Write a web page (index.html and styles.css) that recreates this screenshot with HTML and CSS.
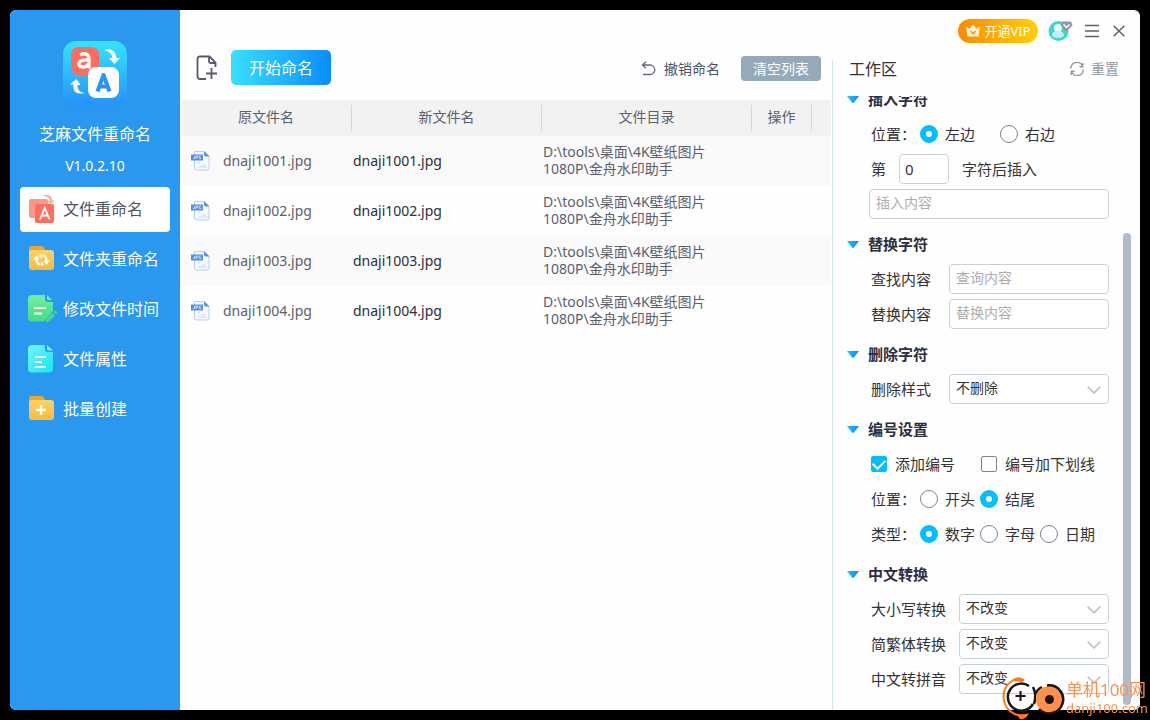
FILE: index.html
```html
<!DOCTYPE html>
<html lang="zh-CN">
<head>
<meta charset="utf-8">
<title>芝麻文件重命名</title>
<link rel="stylesheet" href="styles.css">
</head>
<body>
<svg class="defs" width="0" height="0" aria-hidden="true">
  <defs>
    <linearGradient id="g-logo" x1="0" y1="0" x2="0" y2="1"><stop offset="0" stop-color="#35e4ff"/><stop offset="1" stop-color="#2693ff"/></linearGradient>
    <linearGradient id="g-folder" x1="0" y1="0" x2="0" y2="1"><stop offset="0" stop-color="#ffd06a"/><stop offset="1" stop-color="#fbbb35"/></linearGradient>
    <linearGradient id="g-green" x1="0" y1="0" x2="0" y2="1"><stop offset="0" stop-color="#74eda3"/><stop offset="1" stop-color="#43dc85"/></linearGradient>
    <linearGradient id="g-cyan" x1="0" y1="0" x2="1" y2="1"><stop offset="0" stop-color="#74f3fb"/><stop offset="1" stop-color="#15e6f2"/></linearGradient>
    <linearGradient id="g-tri" x1="0" y1="0" x2="1" y2="0"><stop offset="0" stop-color="#19c8ff"/><stop offset="1" stop-color="#0d86ff"/></linearGradient>
    <linearGradient id="g-avatar" x1="0" y1="0" x2="1" y2="0"><stop offset="0" stop-color="#3fd8cf"/><stop offset="1" stop-color="#38dcb4"/></linearGradient>
    <symbol id="jpg" viewBox="0 0 20 22">
      <path d="M3.500 1.500h9l5.500 5v11.500a2 2 0 0 1-2 2H5.500a2 2 0 0 1-2-2z" fill="#f6faff" stroke="#b7cff5"/>
      <path d="M13 1v3.500a2 2 0 0 0 2 2h3.500z" fill="#5590e6"/>
      <circle cx="8" cy="12.500" r="1.300" fill="#dbe9fc"/><path d="M6 18l3-3 2 1 2-3 4 5z" fill="#dbe9fc"/>
      <rect x="0" y="4.500" width="12" height="6" fill="#5590e6"/>
      <path d="M3.500 6v2.500H2M5 9V6h1.500v1.500H5M10 6H8.300v2.500H10V7.500" fill="none" stroke="#dce9ff" stroke-width=".8"/>
    </symbol>
    <symbol id="tri" viewBox="0 0 12 7"><path d="M0 0h12L7 6.500q-1 .8-2 0z" fill="url(#g-tri)"/></symbol>
  </defs>
</svg>
<div class="window">
  <aside class="sidebar">
    <svg class="logo" viewBox="0 0 64 64" aria-hidden="true">
      <rect width="64" height="64" rx="13" fill="url(#g-logo)"/>
      <rect x="8" y="6" width="28" height="28" rx="7" fill="#ff6d5c"/>
      <path d="M17 14q5-2.500 7.500 0 1.500 1.500 1.500 4V27.500M26 19q-10-.5-10 4 0 3 4 3 3.500 0 6-3.500" fill="none" stroke="#fff" stroke-width="3.300"/>
      <rect x="25" y="26" width="31" height="31" rx="8" fill="#fff"/>
      <path d="M34.500 50.500L40.500 34l6 16.500M37 45.500h7" fill="none" stroke="#2b95f2" stroke-width="4" stroke-linejoin="round"/>
      <path d="M41 9q11-3 12.500 8H57l-5.500 6-5.500-6h3.500Q49 11 41 9z" fill="#fff"/>
      <path d="M22 52Q9 55 10.500 43.500H7l6.500-5.500 4 6h-3Q14 51 22 52z" fill="#fff"/>
    </svg>
    <h1 class="app-name">芝麻文件重命名</h1>
    <p class="version">V1.0.2.10</p>
    <nav class="menu">
      <a class="menu-item active" href="#rename">
        <svg class="menu-icon" viewBox="0 0 30 30"><rect x="1" y="5" width="19" height="19" rx="2" fill="#ff9488"/><path d="M14 2q9-4 10.500 4.500H27L23 10l-4-3.500h3Q21 2 14 2z" fill="#ffb0a6"/><rect x="7" y="10" width="19" height="19" rx="2" fill="#ff6d5c"/><path d="M12 25.500l4.700-11.500 4.800 11.500M13.500 21.500h6.500" fill="none" stroke="#fff" stroke-width="1.900"/></svg>
        <span>文件重命名</span></a>
      <a class="menu-item" href="#folder">
        <svg class="menu-icon" viewBox="0 0 30 30"><path d="M1 4a2 2 0 0 1 2-2h10q3 0 4 4l2 4H1z" fill="#eda628"/><rect x="1" y="6" width="25" height="20" rx="3" fill="url(#g-folder)"/><path d="M12.500 20.500Q8.500 20 8.500 15M14.500 11.500q4 .5 4 5.500" fill="none" stroke="#fff" stroke-width="2.200"/><path d="M5.500 15.500h6L8.500 11zM15.500 16.500h6l-3 4.500zM12 10.500h2v4l-3-2zM15 21.500h-2v-4l3 2z" fill="#fff"/></svg>
        <span>文件夹重命名</span></a>
      <a class="menu-item" href="#time">
        <svg class="menu-icon" viewBox="0 0 30 30"><path d="M4 1h13v4a3 3 0 0 0 3 3h5v9L16 27.500H4a4 4 0 0 1-4-4V5a4 4 0 0 1 4-4z" fill="url(#g-green)"/><path d="M19 1l5 5h-3.500A1.500 1.500 0 0 1 19 4.500z" fill="#74eda3"/><path d="M6 14h12M6 19.500h8" stroke="#fff" stroke-width="2"/><path d="M17.500 28.500l1-3.500 6-6 2.500 2.500-6 6zM25.500 18l1.500-1.500 2.300 2L28 20.200z" fill="#43dc85"/></svg>
        <span>修改文件时间</span></a>
      <a class="menu-item" href="#props">
        <svg class="menu-icon" viewBox="0 0 30 30"><path d="M4 1h13v4a3 3 0 0 0 3 3h5v17a3.500 3.500 0 0 1-3.500 3.500H4A4 4 0 0 1 0 24.500V5a4 4 0 0 1 4-4z" fill="url(#g-cyan)"/><path d="M19 1l6 5.500h-4.500A1.500 1.500 0 0 1 19 5z" fill="#74f3fb"/><path d="M7 13h11M7 18h7M7 23h11" stroke="#fff" stroke-width="2"/></svg>
        <span>文件属性</span></a>
      <a class="menu-item" href="#batch">
        <svg class="menu-icon" viewBox="0 0 30 30"><path d="M1 4a2 2 0 0 1 2-2h10q3 0 4 4l2 4H1z" fill="#eda628"/><rect x="1" y="6" width="25" height="20" rx="3" fill="url(#g-folder)"/><path d="M8 16h10M13 11v10" stroke="#fff" stroke-width="2.400"/></svg>
        <span>批量创建</span></a>
    </nav>
  </aside>

  <div class="content">
    <header class="titlebar">
      <button class="vip" type="button">
        <svg width="16" height="14" viewBox="0 0 16 14"><path d="M1 2.500l3.500 2.300L8 .5l3.500 4.300L15 2.500l-1.500 10h-11z" fill="#fff1d8"/><path d="M5.500 7L8 9.800 10.500 7" fill="none" stroke="#ff9c10" stroke-width="1.600"/></svg>
        开通VIP</button>
      <button class="icon-btn avatar" type="button" aria-label="账号">
        <svg width="25" height="22" viewBox="0 0 25 22"><circle cx="10.500" cy="11" r="10" fill="url(#g-avatar)"/><circle cx="10" cy="8" r="4" fill="#e9fbff"/><path d="M4 16q0-5 6-5t6 5q-2 2-6 2t-6-2z" fill="#c8e8fb"/><path d="M14.500 1.500h8.500l1.500 3.500-6 7-6-7z" fill="#8f97a6"/><path d="M15.500 4.500l3 3 3-3" fill="none" stroke="#fff" stroke-width="1.500"/></svg></button>
      <button class="icon-btn" type="button" aria-label="菜单">
        <svg width="14" height="14" viewBox="0 0 14 14"><path d="M0 1.500h14M0 7h14M0 12.500h14" stroke="#5c6170" stroke-width="1.400"/></svg></button>
      <button class="icon-btn" type="button" aria-label="关闭">
        <svg width="12" height="12" viewBox="0 0 12 12"><path d="M.7.7l10.600 10.600M11.300.7L.7 11.300" stroke="#5c6170" stroke-width="1.500"/></svg></button>
    </header>
    <div class="panes">
      <main class="files">
        <div class="toolbar">
          <button class="icon-btn" type="button" aria-label="添加文件">
            <svg width="22" height="26" viewBox="0 0 22 26" fill="none" stroke="#555a68" stroke-width="1.800"><path d="M10 24H4a2.500 2.500 0 0 1-2.500-2.500V4A2.500 2.500 0 0 1 4 1.500h9.500l6 6V12"/><path d="M13 2v4a2 2 0 0 0 2 2h4.500M15.500 13v11M10 18.500h11"/></svg></button>
          <button class="start" type="button">开始命名</button>
          <div class="actions">
            <button class="undo" type="button">
              <svg width="15" height="15" viewBox="0 0 15 15" fill="none" stroke="#666b78" stroke-width="1.300"><path d="M5 .8L1.500 4 5 7.200M1.500 4H9a4.700 4.700 0 0 1 0 9.500H2"/></svg>
              撤销命名</button>
            <button class="clear" type="button">清空列表</button>
          </div>
        </div>
        <table class="list">
          <colgroup><col class="c-old"><col class="c-new"><col><col class="c-act"><col class="c-end"></colgroup>
          <thead><tr><th><span>原文件名</span></th><th><span>新文件名</span></th><th><span>文件目录</span></th><th><span>操作</span></th><th></th></tr></thead>
          <tbody>
            <tr><td class="old"><div class="file"><svg class="jpg"><use href="#jpg"/></svg>dnaji1001.jpg</div></td><td class="new">dnaji1001.jpg</td><td class="path">D:\tools\桌面\4K壁纸图片<br>1080P\金舟水印助手</td><td></td><td></td></tr>
            <tr><td class="old"><div class="file"><svg class="jpg"><use href="#jpg"/></svg>dnaji1002.jpg</div></td><td class="new">dnaji1002.jpg</td><td class="path">D:\tools\桌面\4K壁纸图片<br>1080P\金舟水印助手</td><td></td><td></td></tr>
            <tr><td class="old"><div class="file"><svg class="jpg"><use href="#jpg"/></svg>dnaji1003.jpg</div></td><td class="new">dnaji1003.jpg</td><td class="path">D:\tools\桌面\4K壁纸图片<br>1080P\金舟水印助手</td><td></td><td></td></tr>
            <tr><td class="old"><div class="file"><svg class="jpg"><use href="#jpg"/></svg>dnaji1004.jpg</div></td><td class="new">dnaji1004.jpg</td><td class="path">D:\tools\桌面\4K壁纸图片<br>1080P\金舟水印助手</td><td></td><td></td></tr>
          </tbody>
        </table>
      </main>

      <section class="work">
        <div class="work-head">
          <h2>工作区</h2>
          <button class="reset" type="button">
            <svg width="14" height="14" viewBox="0 0 14 14" fill="none" stroke="#959aa3" stroke-width="1.500"><path d="M.8 6.500A6 6 0 0 1 12.500 4.500M13.200 7.500A6 6 0 0 1 1.500 9.500M12.700 1v3.700H9.500M1.300 13V9.300h3.200"/></svg>
            重置</button>
        </div>
        <div class="scroll">
          <form class="options">
            <h3><svg class="tri"><use href="#tri"/></svg>插入字符</h3>
            <div class="row"><span class="lead">位置：</span><div class="choices wide"><label><input type="radio" name="ins" checked>左边</label><label><input type="radio" name="ins">右边</label></div></div>
            <div class="row nth"><label for="nth">第</label><input class="field num" id="nth" type="text" value="0"><label for="nth">字符后插入</label></div>
            <div class="row full"><input class="field" type="text" placeholder="插入内容" aria-label="插入内容"></div>

            <h3><svg class="tri"><use href="#tri"/></svg>替换字符</h3>
            <div class="row"><label class="cap" for="find">查找内容</label><input class="field" id="find" type="text" placeholder="查询内容"></div>
            <div class="row"><label class="cap" for="repl">替换内容</label><input class="field" id="repl" type="text" placeholder="替换内容"></div>

            <h3><svg class="tri"><use href="#tri"/></svg>删除字符</h3>
            <div class="row"><label class="cap" for="del">删除样式</label><div class="pick"><select class="field" id="del"><option>不删除</option></select><svg class="chev" viewBox="0 0 14 8"><path d="M.7.7L7 7 13.300.7"/></svg></div></div>

            <h3><svg class="tri"><use href="#tri"/></svg>编号设置</h3>
            <div class="row checks"><label><input type="checkbox" checked>添加编号</label><label><input type="checkbox">编号加下划线</label></div>
            <div class="row"><span class="lead">位置：</span><div class="choices"><label><input type="radio" name="pos">开头</label><label><input type="radio" name="pos" checked>结尾</label></div></div>
            <div class="row"><span class="lead">类型：</span><div class="choices"><label><input type="radio" name="kind" checked>数字</label><label><input type="radio" name="kind">字母</label><label><input type="radio" name="kind">日期</label></div></div>

            <h3><svg class="tri"><use href="#tri"/></svg>中文转换</h3>
            <div class="row"><label class="cap long" for="case">大小写转换</label><div class="pick"><select class="field" id="case"><option>不改变</option></select><svg class="chev" viewBox="0 0 14 8"><path d="M.7.7L7 7 13.300.7"/></svg></div></div>
            <div class="row"><label class="cap long" for="trad">简繁体转换</label><div class="pick"><select class="field" id="trad"><option>不改变</option></select><svg class="chev" viewBox="0 0 14 8"><path d="M.7.7L7 7 13.300.7"/></svg></div></div>
            <div class="row"><label class="cap long" for="pinyin">中文转拼音</label><div class="pick"><select class="field" id="pinyin"><option>不改变</option></select><svg class="chev" viewBox="0 0 14 8"><path d="M.7.7L7 7 13.300.7"/></svg></div></div>
          </form>
          <div class="track"><div class="thumb"></div></div>
        </div>
      </section>
    </div>
  </div>
</div>

<div class="watermark">
  <svg width="64" height="44" viewBox="0 0 64 44" fill="none">
    <path d="M20 5Q16 0 10 5 1 11 1.500 22q1 11 11 16 4 2 12 1" stroke="#ff7a1a" stroke-width="2"/>
    <path d="M11 5q6-7 12-1l-3 2zM15 39q6 1 12-2-3 7-9 6z" fill="#ff7a1a"/>
    <path d="M27 10A13.500 13.500 0 1 0 31 28" stroke="#1c1412" stroke-width="2.500"/>
    <path d="M18.500 15v10M13.500 20h10" stroke="#1c1412" stroke-width="2"/>
    <path d="M31 11q4 8 1 17M40 11q-6 3-7 9" stroke="#1c1412" stroke-width="2.500"/>
    <circle cx="47.500" cy="23.500" r="13.500" fill="#ff914a"/>
    <path d="M45 9.500A14 14 0 1 1 37 33" stroke="#1c1412" stroke-width="2.500"/>
    <circle cx="47.500" cy="23.500" r="4.500" fill="#1c1412"/>
  </svg>
  <div class="mark-text"><span class="mark-name">单机100网</span><span class="mark-url">danji100.com</span></div>
</div>
</body>
</html>
```
FILE: styles.css
```css
* { box-sizing: border-box; }

body {
  margin: 0;
  height: 100vh;
  padding: 10px;
  display: flex;
  background: #000;
  color: #333;
  font: 15px/20px "Noto Sans", "Noto Sans CJK SC", sans-serif;
}

h1, h2, h3, p { margin: 0; font-weight: 400; }
button, input, select { font: inherit; color: inherit; }
button { border: 0; padding: 0; background: none; display: flex; align-items: center; justify-content: center; white-space: nowrap; }
svg { display: block; flex: none; }
.defs { position: absolute; }

.window { flex: 1; min-width: 0; display: flex; border-radius: 6px; overflow: hidden; background: #fefefe; }

/* Sidebar */
.sidebar { width: 170px; flex: none; padding: 31px 10px; background: #2a98ee; color: #fff; text-align: center; }
.logo { width: 64px; height: 64px; margin: 0 auto 17px; }
.app-name { font-size: 16px; line-height: 24px; margin-bottom: 10px; }
.version { font-size: 14px; line-height: 20px; margin-bottom: 11px; }
.menu { display: flex; flex-direction: column; gap: 5px; }
.menu-item { height: 45px; padding: 0 0 1px 8px; display: flex; align-items: center; gap: 5px; border-radius: 4px; color: #fff; font-size: 16px; text-decoration: none; }
.menu-item.active { background: #fff; color: #4f5363; }
.menu-icon { width: 30px; height: 30px; }

/* Title bar */
.content { flex: 1; min-width: 0; display: flex; flex-direction: column; }
.titlebar { height: 40px; padding: 1px 15px 0 0; display: flex; align-items: center; justify-content: flex-end; gap: 14px; }
.vip { width: 80px; height: 24px; gap: 3px; border-radius: 12px; background: linear-gradient(90deg, #ff8a00, #ffd000); color: #fff; font-size: 13px; }
.avatar { width: 23px; margin-left: -4px; justify-content: flex-start; }

.panes { flex: 1; min-height: 0; display: flex; }

/* File list */
.files { flex: 1; min-width: 0; padding: 0 1px; }
.toolbar { height: 50px; padding: 0 10px 15px 15px; display: flex; align-items: center; }
.start { width: 100px; height: 35px; margin-left: 13px; border-radius: 5px; background: linear-gradient(90deg, #37e0ff, #0a8cff); color: #fff; font-size: 16px; }
.actions { margin-left: auto; padding-top: 2px; display: flex; align-items: center; gap: 21px; }
.undo { gap: 8px; color: #4f5363; font-size: 14px; }
.clear { width: 80px; height: 25px; border-radius: 4px; background: #94a9ba; color: #fff; font-size: 14px; }

.list { width: 100%; table-layout: fixed; border-collapse: collapse; color: #5b5f6c; font-size: 14px; }
.c-old { width: 171px; }
.c-new { width: 190px; }
.c-act { width: 60px; }
.c-end { width: 19px; }
.list th { height: 36px; padding: 5px 0; background: #f2f2f2; font-weight: 400; line-height: 24px; }
.list th span { display: block; height: 26px; border-right: 1px solid #d6d6d6; }
.list td { height: 50px; padding: 0 0 0 1px; }
.list tbody tr:nth-child(odd) { background: #fafafa; }
.file { display: flex; align-items: center; gap: 12px; padding-left: 9px; }
.jpg { width: 20px; height: 22px; }
.list .new { color: #2b2f3e; }
.list .path { padding-bottom: 2px; line-height: 17px; }

/* Workspace */
.work { width: 308px; flex: none; margin-top: 10px; display: flex; flex-direction: column; border-left: 1px solid #cfe4ee; }
.work-head { height: 36px; padding: 0 21px 18px 16px; display: flex; align-items: center; justify-content: space-between; }
.work-head h2 { font-size: 16px; }
.reset { gap: 7px; color: #959aa3; font-size: 14px; }
.scroll { flex: 1; min-height: 0; display: flex; overflow: hidden; }
.options { flex: 1; min-width: 0; padding: 0 14px 16px 14px; display: flex; flex-direction: column; justify-content: flex-end; gap: 5px; }
.options h3 { height: 30px; flex: none; margin-top: 5px; display: flex; align-items: center; gap: 9px; color: #2b2f3e; font-size: 15px; font-weight: 700; }
.tri { width: 12px; height: 7px; }
.row { height: 30px; flex: none; padding-left: 24px; display: flex; align-items: center; white-space: nowrap; }
.full { padding-left: 22px; }
.cap { width: 78px; flex: none; }
.long { width: 88px; }
.lead { width: 49px; flex: none; }
.choices { display: flex; gap: 5px; }
.wide { gap: 25px; }
.choices label { display: flex; align-items: center; gap: 7px; }
.checks { gap: 26px; }
.checks label { display: flex; align-items: center; gap: 8px; }
.nth { gap: 13px; }

.field { width: 100%; min-width: 0; height: 30px; padding: 0 6px 3px; border: 1px solid #c5d2da; border-radius: 4px; background: #fff; color: #333; font-size: 14px; outline: 0; }
.field::placeholder { color: #adadad; opacity: 1; }
.num { width: 50px; padding: 0 5px; font-size: 15px; }
.pick { position: relative; flex: 1; }
.pick select { display: block; appearance: none; }
.chev { position: absolute; right: 8px; top: 12px; width: 14px; height: 8px; fill: none; stroke: #bcc9d3; stroke-width: 1.8; pointer-events: none; }

input[type="radio"], input[type="checkbox"] { appearance: none; flex: none; margin: 0; border: 1px solid #7d8298; background: #fff; }
input[type="radio"] { width: 18px; height: 18px; border-radius: 50%; }
input[type="radio"]:checked { border: 6px solid #00bfff; }
input[type="checkbox"] { width: 16px; height: 16px; border-radius: 2px; display: grid; place-items: center; }
input[type="checkbox"]:checked { border-color: #00bfff; background: #00bfff; }
input[type="checkbox"]:checked::before { content: ""; width: 10px; height: 6px; margin-bottom: 3px; border: solid #fff; border-width: 0 0 2px 2px; transform: rotate(-45deg); }

.track { width: 17px; padding: 0 9px 5px 0; display: flex; flex-direction: column; justify-content: flex-end; }
.thumb { height: 77.5%; border-radius: 4px; background: #b1bbc8; }

/* Site mark laid over the bottom right corner */
.watermark { position: fixed; right: 2px; bottom: 0; display: flex; align-items: center; color: #ff914a; }
.mark-text { display: flex; flex-direction: column; }
.mark-name { font-size: 17px; line-height: 20px; }
.mark-url { font-size: 13px; line-height: 16px; }
```
